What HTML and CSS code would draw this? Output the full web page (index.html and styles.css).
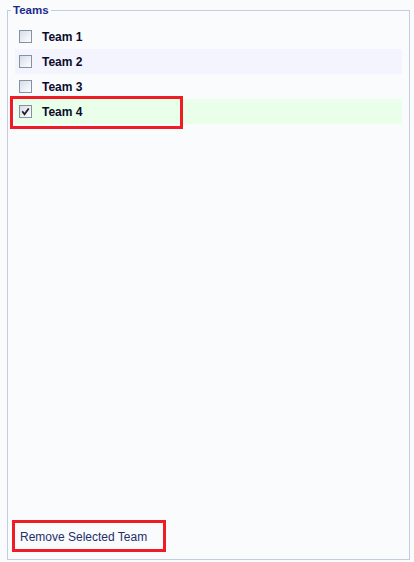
FILE: index.html
```html
<!DOCTYPE html>
<html>
<head>
<meta charset="utf-8">
<link rel="stylesheet" href="styles.css">
</head>
<body>
<fieldset class="teams">
  <legend class="teams-legend">Teams</legend>
  <ul class="team-list">
    <li class="team-row"><span class="box"></span><span class="team-name">Team 1</span></li>
    <li class="team-row alt"><span class="box"></span><span class="team-name">Team 2</span></li>
    <li class="team-row"><span class="box"></span><span class="team-name">Team 3</span></li>
    <li class="team-row selected">
      <span class="box checked"><svg viewBox="0 0 13 13" width="13" height="13"><path d="M3.8 7 L5.5 9.2 L9.2 4.2" fill="none" stroke="#1e1e1e" stroke-width="1.8" stroke-linecap="square"/></svg></span>
      <span class="team-name">Team 4</span>
      <span class="mark"></span>
    </li>
  </ul>
  <button class="remove-btn" type="button">Remove Selected Team</button>
</fieldset>
</body>
</html>
```
FILE: styles.css
```css
html, body {
  margin: 0;
  padding: 0;
  height: 100%;
}
body {
  background: #fafbfd;
  font-family: "Liberation Sans", Arial, sans-serif;
}
.teams {
  box-sizing: border-box;
  height: 557px;
  margin: 3px 4px 2px 7px;
  padding: 7px 7px 0 7px;
  border: 1px solid #c3cddd;
  display: flex;
  flex-direction: column;
  min-width: 0;
}
.teams-legend {
  margin-left: -4px;
  padding: 0 2px;
  font-size: 11.5px;
  line-height: 14px;
  font-weight: bold;
  color: #1c2a8c;
}
.team-list {
  list-style: none;
  margin: 0;
  padding: 0;
}
.team-row {
  position: relative;
  height: 25px;
  display: flex;
  align-items: center;
  padding-left: 4px;
}
.team-row.alt {
  background: #f3f4fd;
}
.team-row.selected {
  background: #eaffe9;
}
.box {
  box-sizing: border-box;
  width: 13px;
  height: 13px;
  border: 1px solid #8592a6;
  background: linear-gradient(135deg, #d6dde7 0%, #eef1f5 60%, #fbfcfd 100%);
  display: block;
  flex: none;
}
.box.checked svg {
  display: block;
  margin: -1px;
}
.team-name {
  margin-left: 10px;
  font-size: 12px;
  font-weight: bold;
  color: #0b0b2e;
}
.mark {
  position: absolute;
  left: -5px;
  top: -3px;
  width: 173px;
  height: 33px;
  box-sizing: border-box;
  border: 3px solid #ee1c25;
}
.remove-btn {
  margin-top: auto;
  margin-left: -3px;
  margin-bottom: 7px;
  align-self: flex-start;
  box-sizing: border-box;
  width: 154px;
  height: 32px;
  padding: 2px 0 0 5px;
  border: 3px solid #ee1c25;
  background: transparent;
  text-align: left;
  font-family: "Liberation Sans", Arial, sans-serif;
  font-size: 12px;
  color: #1e2f6a;
}
```
